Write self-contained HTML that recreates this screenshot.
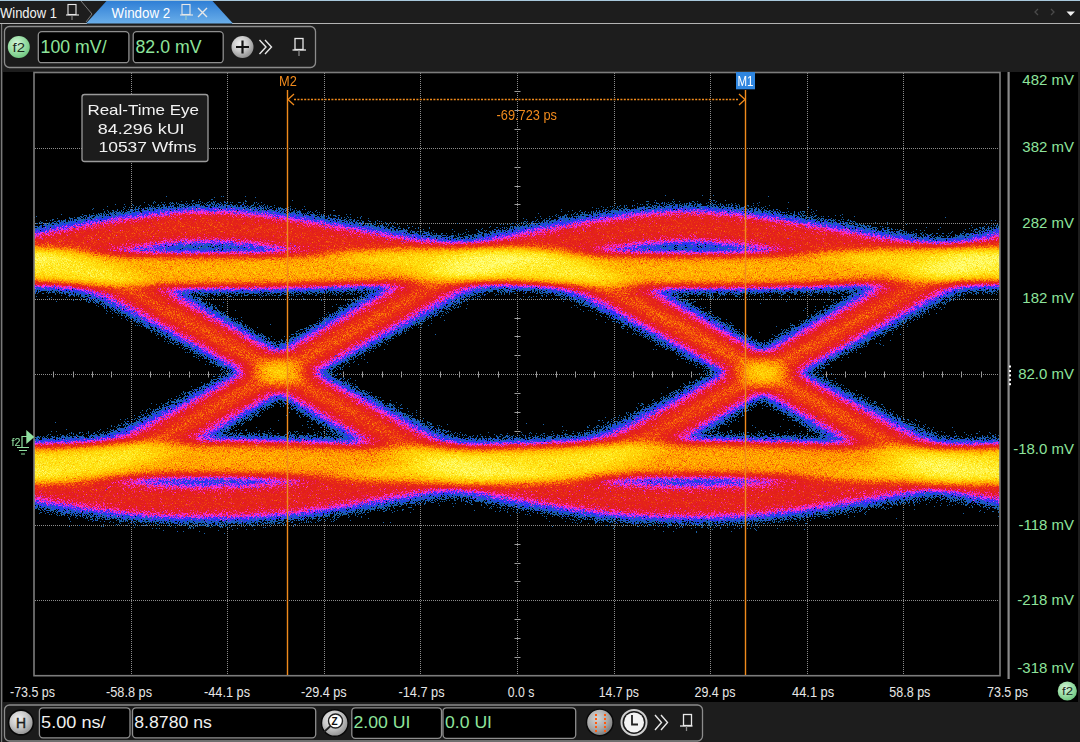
<!DOCTYPE html>
<html><head><meta charset="utf-8">
<style>
html,body{margin:0;padding:0;width:1080px;height:742px;overflow:hidden;background:#1d1d1d;}
svg,canvas{position:absolute;left:0;top:0;}
text{font-family:"Liberation Sans",sans-serif;}
</style></head><body>
<svg id="base" width="1080" height="742" viewBox="0 0 1080 742">
<defs>
<linearGradient id="tabg" x1="0" y1="0" x2="0" y2="1"><stop offset="0" stop-color="#2f7fd6"/><stop offset="1" stop-color="#6aaee9"/></linearGradient>
<radialGradient id="grn" cx="0.4" cy="0.35" r="0.7"><stop offset="0" stop-color="#d8f5dc"/><stop offset="0.45" stop-color="#a4e3ae"/><stop offset="1" stop-color="#6cc47c"/></radialGradient>
<radialGradient id="gry" cx="0.4" cy="0.35" r="0.7"><stop offset="0" stop-color="#f0f0f0"/><stop offset="0.5" stop-color="#c8c8c8"/><stop offset="1" stop-color="#8a8a8a"/></radialGradient>
<radialGradient id="gry2" cx="0.4" cy="0.35" r="0.75"><stop offset="0" stop-color="#d4d4d4"/><stop offset="0.55" stop-color="#a8a8a8"/><stop offset="1" stop-color="#6a6a6a"/></radialGradient>
</defs>
<!-- top line -->
<rect x="0" y="0" width="1080" height="1" fill="#a8c8dc"/>
<!-- tab bar lines -->
<rect x="0" y="23" width="87" height="1" fill="#b4b4b4"/>
<rect x="232" y="23" width="848" height="1" fill="#b4b4b4"/>
<!-- tab1 edge -->
<polyline points="81,1 92,14 86,22" fill="none" stroke="#7a7a7a" stroke-width="1"/>
<!-- active tab -->
<polygon points="86,23.5 106.5,1 212.5,1 233,23.5" fill="url(#tabg)"/>
<text x="0" y="18.4" fill="#f2f2f2" font-size="14.5" textLength="57" lengthAdjust="spacingAndGlyphs">Window 1</text>
<text x="111.6" y="18.4" fill="#ffffff" font-size="14.5" textLength="58.7" lengthAdjust="spacingAndGlyphs">Window 2</text>
<!-- pins in tabs -->
<g fill="none" stroke="#e8e8e8" stroke-width="1.1">
<rect x="68" y="4.5" width="8" height="10"/><line x1="66" y1="15" x2="79" y2="15"/><line x1="72" y1="15" x2="72" y2="20" stroke="#888"/>
<rect x="182" y="4.5" width="8" height="10"/><line x1="180" y1="15" x2="193" y2="15"/><line x1="186" y1="15" x2="186" y2="20" stroke="#9cc"/>
<path d="M198,8 L207,17 M207,8 L198,17" stroke-width="1.4"/>
</g>
<!-- right arrows -->
<path d="M1038,9 L1035,12 L1038,15" fill="none" stroke="#4a4a4a" stroke-width="1.3"/>
<path d="M1051,9 L1054,12 L1051,15" fill="none" stroke="#4a4a4a" stroke-width="1.3"/>
<polygon points="1066.5,11.5 1075,11.5 1070.7,16" fill="#f0f0f0"/>

<!-- toolbar -->
<rect x="4.5" y="26.5" width="311" height="41" rx="5" fill="#1b1b1b" stroke="#8c8c8c" stroke-width="1.3"/>
<circle cx="18.8" cy="47" r="11" fill="url(#grn)"/>
<text x="12.5" y="51.5" fill="#1a2a1c" font-size="12" textLength="12.5" lengthAdjust="spacingAndGlyphs">f2</text>
<rect x="38.3" y="31.6" width="90.6" height="31.1" rx="3.5" fill="#000" stroke="#8e8e8e" stroke-width="1.3"/>
<rect x="133.2" y="31.6" width="90" height="31.1" rx="3.5" fill="#000" stroke="#8e8e8e" stroke-width="1.3"/>
<text x="40.6" y="52.7" fill="#8ee49c" font-size="17.8" textLength="66" lengthAdjust="spacingAndGlyphs">100 mV/</text>
<text x="135.5" y="52.7" fill="#8ee49c" font-size="17.8" textLength="66" lengthAdjust="spacingAndGlyphs">82.0 mV</text>
<circle cx="242.5" cy="47" r="11" fill="url(#gry)"/>
<path d="M236,47 H249 M242.5,40.5 V53.5" stroke="#111" stroke-width="2.2"/>
<path d="M259.5,40 L266,47 L259.5,54 M265,40 L271.5,47 L265,54" fill="none" stroke="#e8e8e8" stroke-width="1.4"/>
<g fill="none" stroke="#e8e8e8" stroke-width="1.3">
<rect x="295" y="38.5" width="8" height="11"/><line x1="292.5" y1="50" x2="306" y2="50"/><line x1="299" y1="50" x2="299" y2="56" stroke="#888"/>
</g>

<!-- plot black region -->
<rect x="3" y="72" width="1075" height="630" fill="#000"/>
<rect x="1" y="24" width="1.2" height="718" fill="#7a7a7a"/>
<!-- grid -->
<g id="grid" stroke="#8c8c8c" stroke-width="1" stroke-dasharray="1,1" fill="none">
<line x1="131.5" y1="73" x2="131.5" y2="675"/>
<line x1="227.5" y1="73" x2="227.5" y2="675"/>
<line x1="324.5" y1="73" x2="324.5" y2="675"/>
<line x1="420.5" y1="73" x2="420.5" y2="675"/>
<line x1="517.5" y1="73" x2="517.5" y2="675"/>
<line x1="614.5" y1="73" x2="614.5" y2="675"/>
<line x1="710.5" y1="73" x2="710.5" y2="675"/>
<line x1="807.5" y1="73" x2="807.5" y2="675"/>
<line x1="903.5" y1="73" x2="903.5" y2="675"/>
<line x1="35" y1="148.5" x2="999" y2="148.5"/>
<line x1="35" y1="223.5" x2="999" y2="223.5"/>
<line x1="35" y1="299.5" x2="999" y2="299.5"/>
<line x1="35" y1="374.5" x2="999" y2="374.5"/>
<line x1="35" y1="450.5" x2="999" y2="450.5"/>
<line x1="35" y1="525.5" x2="999" y2="525.5"/>
<line x1="35" y1="600.5" x2="999" y2="600.5"/>
<path d="M53.5,371.5V377.5M73.5,371.5V377.5M92.5,371.5V377.5M111.5,371.5V377.5M150.5,371.5V377.5M169.5,371.5V377.5M189.5,371.5V377.5M208.5,371.5V377.5M247.5,371.5V377.5M266.5,371.5V377.5M285.5,371.5V377.5M304.5,371.5V377.5M343.5,371.5V377.5M362.5,371.5V377.5M382.5,371.5V377.5M401.5,371.5V377.5M440.5,371.5V377.5M459.5,371.5V377.5M478.5,371.5V377.5M498.5,371.5V377.5M536.5,371.5V377.5M556.5,371.5V377.5M575.5,371.5V377.5M594.5,371.5V377.5M633.5,371.5V377.5M652.5,371.5V377.5M672.5,371.5V377.5M691.5,371.5V377.5M730.5,371.5V377.5M749.5,371.5V377.5M768.5,371.5V377.5M787.5,371.5V377.5M826.5,371.5V377.5M845.5,371.5V377.5M865.5,371.5V377.5M884.5,371.5V377.5M923.5,371.5V377.5M942.5,371.5V377.5M961.5,371.5V377.5M981.5,371.5V377.5M514.5,91.5H520.5M514.5,110.5H520.5M514.5,129.5H520.5M514.5,167.5H520.5M514.5,186.5H520.5M514.5,204.5H520.5M514.5,242.5H520.5M514.5,261.5H520.5M514.5,280.5H520.5M514.5,318.5H520.5M514.5,336.5H520.5M514.5,355.5H520.5M514.5,393.5H520.5M514.5,412.5H520.5M514.5,431.5H520.5M514.5,468.5H520.5M514.5,487.5H520.5M514.5,506.5H520.5M514.5,544.5H520.5M514.5,563.5H520.5M514.5,581.5H520.5M514.5,619.5H520.5M514.5,638.5H520.5M514.5,657.5H520.5" stroke-dasharray="none" stroke="#9a9a9a"/>
</g>
<!-- right axis line -->
<rect x="1007.5" y="72" width="2.2" height="607" fill="#8a8a8a"/>
<g fill="#fff"><rect x="1009" y="365.5" width="2" height="2"/><rect x="1009" y="370" width="2" height="2"/><rect x="1009" y="374.4" width="2" height="2"/><rect x="1009" y="378.8" width="2" height="2"/><rect x="1009" y="383.2" width="2" height="2"/></g>
<!-- y labels -->
<g fill="#8ee49c" font-size="15" text-anchor="end">
<text x="1074" y="85">482 mV</text>
<text x="1074" y="152">382 mV</text>
<text x="1074" y="227.5">282 mV</text>
<text x="1074" y="302.5">182 mV</text>
<text x="1074" y="378.5">82.0 mV</text>
<text x="1074" y="454">-18.0 mV</text>
<text x="1074" y="529.5">-118 mV</text>
<text x="1074" y="605">-218 mV</text>
<text x="1074" y="673">-318 mV</text>
</g>
<!-- x labels -->
<g fill="#e6e6e6" font-size="14">
<text x="10" y="696.5" textLength="45" lengthAdjust="spacingAndGlyphs">-73.5 ps</text>
<text x="106" y="696.5" textLength="46" lengthAdjust="spacingAndGlyphs">-58.8 ps</text>
<text x="204" y="696.5" textLength="46" lengthAdjust="spacingAndGlyphs">-44.1 ps</text>
<text x="301" y="696.5" textLength="45.7" lengthAdjust="spacingAndGlyphs">-29.4 ps</text>
<text x="398.5" y="696.5" textLength="46" lengthAdjust="spacingAndGlyphs">-14.7 ps</text>
<text x="507.8" y="696.5" textLength="26.6" lengthAdjust="spacingAndGlyphs">0.0 s</text>
<text x="598.8" y="696.5" textLength="40.2" lengthAdjust="spacingAndGlyphs">14.7 ps</text>
<text x="694.5" y="696.5" textLength="40.9" lengthAdjust="spacingAndGlyphs">29.4 ps</text>
<text x="792" y="696.5" textLength="42.2" lengthAdjust="spacingAndGlyphs">44.1 ps</text>
<text x="889.3" y="696.5" textLength="41.1" lengthAdjust="spacingAndGlyphs">58.8 ps</text>
<text x="987" y="696.5" textLength="41" lengthAdjust="spacingAndGlyphs">73.5 ps</text>
</g>
<circle cx="1067.3" cy="691" r="9.6" fill="url(#grn)"/>
<text x="1062" y="695" fill="#1a2a1c" font-size="10.5" textLength="11" lengthAdjust="spacingAndGlyphs">f2</text>

<!-- bottom toolbar -->
<rect x="4.5" y="705" width="698" height="36" rx="5" fill="#1b1b1b" stroke="#8c8c8c" stroke-width="1.3"/>
<circle cx="21" cy="722.5" r="12.4" fill="url(#gry)" stroke="#080808" stroke-width="1.6"/>
<text x="16" y="728" fill="#1a1a1a" font-size="14.5" textLength="10" lengthAdjust="spacingAndGlyphs" stroke="#1a1a1a" stroke-width="0.4">H</text>
<rect x="39.4" y="707.8" width="90.6" height="30" rx="3.5" fill="#000" stroke="#8e8e8e" stroke-width="1.3"/>
<rect x="132.5" y="707.8" width="183.2" height="30" rx="3.5" fill="#000" stroke="#8e8e8e" stroke-width="1.3"/>
<text x="41.1" y="728.3" fill="#f0f0f0" font-size="16.8" textLength="64.5" lengthAdjust="spacingAndGlyphs">5.00 ns/</text>
<text x="134.3" y="728.3" fill="#f0f0f0" font-size="16.8" textLength="77.5" lengthAdjust="spacingAndGlyphs">8.8780 ns</text>
<circle cx="334.8" cy="723" r="13.3" fill="url(#gry)" stroke="#080808" stroke-width="1.4"/>
<circle cx="335.5" cy="721" r="7" fill="#fff" stroke="#222" stroke-width="1.4"/>
<line x1="330.5" y1="726" x2="324" y2="732" stroke="#222" stroke-width="1.8"/>
<text x="331.5" y="725" fill="#111" font-size="10" font-weight="bold">Z</text>
<rect x="351.8" y="707.8" width="89.7" height="30.5" rx="3.5" fill="#000" stroke="#8e8e8e" stroke-width="1.3"/>
<rect x="443" y="707.8" width="132.7" height="30.5" rx="3.5" fill="#000" stroke="#8e8e8e" stroke-width="1.3"/>
<text x="353.5" y="728.3" fill="#8ee49c" font-size="16.8" textLength="57" lengthAdjust="spacingAndGlyphs">2.00 UI</text>
<text x="445" y="728.3" fill="#8ee49c" font-size="16.8" textLength="47" lengthAdjust="spacingAndGlyphs">0.0 UI</text>
<circle cx="599.8" cy="722.4" r="13.3" fill="url(#gry2)" stroke="#080808" stroke-width="1.4"/>
<g fill="#ff5a10"><rect x="595" y="714" width="2" height="2"/><rect x="595" y="718" width="2" height="2"/><rect x="595" y="722" width="2" height="2"/><rect x="595" y="726" width="2" height="2"/><rect x="595" y="730" width="2" height="2"/>
<rect x="604" y="714" width="2" height="2"/><rect x="604" y="718" width="2" height="2"/><rect x="604" y="722" width="2" height="2"/><rect x="604" y="726" width="2" height="2"/><rect x="604" y="730" width="2" height="2"/></g>
<circle cx="634" cy="722.4" r="12.5" fill="none" stroke="#cfcfcf" stroke-width="2"/>
<circle cx="634" cy="722.4" r="10" fill="#f4f4f4"/>
<path d="M632,715 V724.5 H638" fill="none" stroke="#222" stroke-width="1.8"/>
<path d="M655,715 L661.5,722.5 L655,730 M661,715 L667.5,722.5 L661,730" fill="none" stroke="#e8e8e8" stroke-width="1.4"/>
<g fill="none" stroke="#e8e8e8" stroke-width="1.3">
<rect x="683.5" y="714.5" width="8" height="11"/><line x1="680" y1="726" x2="692.5" y2="726"/><line x1="686.5" y1="726" x2="686.5" y2="731" stroke="#888"/>
</g>
</svg>
<!--FB--><svg id="eyefb" width="1080" height="742" viewBox="0 0 1080 742"><g transform="translate(0.5,0.5)">
<path fill="#1e50aa" fill-rule="evenodd" d="M33,229 31,266 32,284 36,290 56,290 61,292 78,293 95,300 100,300 106,305 117,309 138,321 141,321 146,326 155,328 172,339 188,346 230,370 226,376 194,391 185,398 152,413 150,416 144,417 133,424 127,425 124,428 107,434 89,437 81,436 35,439 32,444 31,466 32,495 35,506 56,509 63,512 83,514 90,513 97,516 102,515 122,519 128,518 181,523 189,521 217,523 221,521 250,522 285,518 304,518 308,516 313,517 316,515 321,516 333,512 347,512 357,509 367,509 407,501 412,502 421,499 430,499 433,497 465,496 477,500 483,499 501,504 546,510 561,514 574,514 584,517 593,516 597,519 617,518 632,522 659,521 680,523 683,521 700,523 703,521 724,522 771,519 795,515 803,516 807,514 812,515 816,512 827,513 838,509 843,510 856,506 865,507 886,501 933,495 963,498 968,502 981,502 995,506 998,505 1000,501 1002,464 1001,444 998,439 938,438 923,431 916,430 912,426 909,426 899,419 888,415 862,400 854,398 851,394 830,385 811,373 814,368 834,358 845,350 853,348 945,297 967,290 998,289 1001,284 1002,268 1001,234 999,228 982,231 980,233 972,233 966,236 931,238 929,236 918,237 910,234 878,231 865,227 829,222 825,220 817,221 810,218 804,219 797,216 787,216 776,212 753,211 731,207 676,205 618,210 569,219 559,218 554,221 516,227 505,231 496,231 475,237 453,238 432,236 428,234 408,233 403,230 392,230 384,227 375,227 334,219 325,219 322,217 294,212 290,213 278,210 240,206 193,205 143,209 141,211 137,210 96,216 93,218 88,217 85,219 44,225ZM704,432 738,411 744,409 748,405 759,400 766,400 782,411 787,412 790,415 794,415 803,423 819,431 821,436 818,438 790,436 707,435ZM222,432 259,408 281,399 293,405 305,414 308,414 312,418 334,429 340,436 336,438 308,436 225,435ZM854,292 849,297 826,310 822,314 811,318 787,333 781,335 777,339 764,345 757,344 736,333 724,324 701,312 697,308 679,300 676,295 683,292 741,293 848,290ZM327,371 351,356 365,350 384,338 399,332 415,322 422,320 426,316 435,313 464,296 491,289 516,289 553,292 581,300 592,307 596,307 598,310 621,320 625,324 629,324 641,332 652,336 656,340 661,341 665,345 675,349 686,357 705,365 712,371 712,374 673,396 640,411 631,418 625,419 608,428 594,433 580,436 554,438 462,439 435,432 419,422 404,416 400,412 385,406 372,397 365,395 351,388 349,385 335,379ZM369,291 365,297 292,338 288,342 275,345 256,335 240,324 230,320 191,296 193,292 259,293 327,290 345,291 364,289Z"/>
<path fill="#282df0" fill-rule="evenodd" d="M34,233 33,282 35,286 75,289 100,296 114,302 117,305 120,305 147,321 156,324 164,330 171,332 180,339 198,347 204,352 231,366 235,371 235,373 228,379 207,389 187,402 164,412 125,433 88,440 35,442 33,445 33,490 35,500 40,503 54,504 83,510 128,514 131,516 139,515 171,518 189,517 229,519 311,513 315,511 412,497 427,493 462,492 485,495 509,501 551,506 571,511 592,512 596,514 657,518 732,518 757,515 763,516 778,513 783,514 814,508 825,509 835,505 846,505 924,491 954,493 973,498 978,497 997,501 999,497 1000,446 998,442 944,442 919,436 820,384 805,374 805,371 811,365 946,292 963,287 997,286 1000,282 1000,239 998,232 967,240 912,240 902,237 852,231 845,228 831,227 810,222 805,223 775,216 706,209 678,209 627,213 573,221 477,240 443,241 429,238 409,237 400,234 392,234 265,212 258,213 241,210 237,211 234,209 184,209 176,211 151,212 138,214 135,216 118,216 103,220 55,227 48,230 36,231ZM229,481 233,481ZM209,481 217,480 218,482 214,483ZM197,481 201,480 203,482 198,483ZM693,481 695,479 700,481 697,483ZM693,434 721,416 742,406 753,398 765,396 830,432 836,437 836,439 830,441 783,439 756,440 734,438 710,439 697,437ZM210,434 244,412 254,408 271,397 280,395 296,402 300,406 339,427 351,435 352,438 348,441 257,438 235,439 215,438ZM867,288 859,297 812,322 782,341 764,349 756,348 746,341 718,327 702,316 669,299 663,293 665,290 677,289 741,290 852,286ZM321,370 360,347 367,345 369,342 390,332 398,326 407,323 411,319 435,306 438,306 449,298 474,288 507,286 549,288 582,296 623,316 627,320 656,334 708,364 713,365 719,370 719,373 714,378 675,400 645,414 635,421 598,436 569,440 530,442 458,442 442,439 414,426 374,403 328,380 321,374ZM382,289 382,291 374,297 361,303 357,307 348,310 334,320 280,349 266,345 233,325 209,313 179,294 183,290 198,289 271,290 359,286 380,287ZM640,247 642,245 656,245 662,243 699,242 735,246 736,248 714,251 668,251 649,249 644,250ZM163,247 165,245 178,243 185,244 211,242 232,243 236,245 245,245 248,247 251,245 254,248 248,250 239,249 224,251 166,250Z"/>
<path fill="#f032e1" fill-rule="evenodd" d="M34,239 33,278 36,285 68,286 92,290 107,295 233,363 240,370 240,373 234,379 216,390 128,435 112,439 87,442 35,444 33,451 33,481 35,496 39,499 132,513 141,512 159,515 177,514 229,516 291,512 351,504 369,499 404,495 413,492 459,489 467,491 482,491 512,498 521,498 541,503 551,503 597,511 649,515 709,516 757,512 764,513 768,511 799,509 808,506 830,504 872,496 875,497 908,490 914,491 922,489 937,489 948,491 954,490 990,497 997,497 1000,481 1000,451 998,444 943,444 918,439 892,427 885,421 865,412 854,404 843,400 811,382 800,372 807,364 944,289 962,285 997,284 1000,277 1000,248 997,236 968,242 921,243 870,237 856,233 818,228 781,220 778,221 764,218 746,217 736,214 728,215 695,212 667,212 663,214 653,213 648,215 634,215 625,218 591,221 489,241 442,243 409,240 401,237 384,236 376,233 368,233 354,229 346,229 342,227 334,227 285,218 235,214 230,212 171,213 168,215 151,215 147,217 119,219 115,221 72,227 65,230 41,233 36,235ZM274,481 278,481ZM621,482 628,478 635,479 646,477 732,477 757,481 756,483 752,482 741,486 662,487 659,485 651,486 635,485 631,483 623,484ZM140,482 141,480 149,478 250,477 271,479 274,481 271,484 259,484 255,486 220,486 202,488 163,485 155,486ZM687,437 689,433 700,424 705,423 715,416 723,413 730,407 740,403 752,395 763,393 769,394 787,403 824,426 836,431 844,439 838,443 823,444 779,441 691,440ZM201,435 207,429 212,428 221,421 228,419 245,407 253,405 271,394 283,393 290,395 330,419 342,424 355,432 361,440 357,443 350,444 294,441 219,441 207,440ZM875,288 872,293 860,301 839,311 813,327 806,329 802,333 779,346 767,351 754,350 698,319 694,315 671,304 656,293 659,289 669,287 735,288 869,284ZM316,373 320,366 415,314 419,310 426,308 438,300 441,300 454,291 471,286 493,284 549,286 583,293 606,303 638,322 661,333 667,338 684,346 712,363 717,364 724,371 719,379 681,399 675,404 660,410 647,419 613,435 573,442 548,442 533,444 458,444 440,441 418,432 405,424 402,424 370,405 362,402 358,398 336,386 327,383ZM391,290 346,317 297,343 293,347 282,351 269,350 266,347 259,345 239,332 230,329 219,321 191,307 182,300 179,300 172,293 174,289 201,287 271,288 360,284 386,285ZM616,249 618,246 622,247 625,244 638,242 684,239 736,242 766,248 764,250 753,252 745,251 730,253 632,252 628,250 624,252ZM279,248 274,251 245,253 171,253 150,251 144,252 133,249 136,246 151,245 166,241 172,242 179,240 211,239 232,240 236,242 247,241 273,247 277,246Z"/>
<path fill="#dc1c28" fill-rule="evenodd" d="M35,240 34,279 36,283 87,287 109,292 119,298 123,298 127,302 130,302 150,314 159,317 162,321 172,325 178,330 191,335 195,339 202,341 218,352 232,358 243,366 245,373 235,383 230,384 224,389 194,406 189,407 185,411 180,412 161,424 158,424 135,436 95,443 36,445 34,448 34,483 37,494 52,496 60,499 117,506 120,508 135,508 138,510 153,509 158,511 231,512 254,511 262,509 276,510 287,507 295,508 303,505 309,506 319,503 325,504 348,498 361,498 363,496 378,495 384,492 389,493 392,491 404,491 410,489 460,487 493,490 498,492 517,492 537,498 548,498 552,501 583,504 586,506 600,506 605,508 619,508 623,510 635,509 638,511 656,510 663,512 709,512 720,510 739,511 765,509 768,507 782,505 787,506 790,504 798,505 848,495 861,495 864,492 871,493 876,490 884,491 899,488 955,488 981,492 986,491 991,493 996,493 998,489 998,446 944,446 916,442 852,409 826,393 822,393 817,388 800,379 796,372 797,368 809,358 813,358 830,347 841,343 849,336 854,335 862,329 880,321 885,316 903,308 914,300 935,289 957,284 998,282 999,246 997,240 950,245 904,244 897,242 872,241 859,237 842,236 824,231 788,225 784,226 781,224 755,221 751,219 745,220 728,217 717,218 711,216 686,215 679,217 673,215 668,217 661,216 642,219 637,218 625,221 613,221 607,224 592,224 588,227 564,229 551,234 546,233 544,236 536,235 533,237 480,244 425,244 402,242 399,240 386,240 369,235 351,234 343,231 335,231 321,227 306,226 284,221 229,215 182,215 158,219 152,218 148,220 128,221 114,225 110,224 74,230 51,236 43,236ZM601,482 607,479 637,475 734,475 776,478 779,481 779,484 764,488 747,488 741,490 720,489 710,491 692,490 690,492 683,490 661,491 642,490 636,488 615,488 604,485ZM120,482 123,479 160,475 254,475 297,478 300,480 300,483 297,486 242,491 146,490 140,487 130,489 123,486ZM676,435 685,428 694,425 698,421 720,410 725,405 728,405 743,395 747,395 755,391 768,391 778,394 834,427 841,429 845,433 852,436 854,440 851,444 844,445 762,444 737,442 718,443 681,441ZM193,434 208,423 215,421 231,410 235,410 248,403 259,395 262,395 268,391 284,390 292,392 340,419 346,424 352,425 362,433 368,435 371,438 371,441 368,444 358,446 297,443 201,442 196,440 193,437ZM312,367 341,349 364,338 400,317 403,317 414,308 432,300 439,294 456,287 479,283 517,283 563,286 587,291 601,297 660,330 667,332 671,336 676,337 699,352 705,353 714,360 718,361 727,368 727,376 723,381 710,389 706,389 692,399 665,412 654,420 647,422 645,425 613,438 565,444 466,446 438,443 415,436 408,430 397,426 386,418 382,418 377,413 360,404 357,404 353,400 322,384 312,375ZM886,288 885,290 879,292 876,297 870,298 862,304 841,314 835,319 785,345 773,353 751,352 741,347 739,344 731,342 727,338 692,320 686,315 683,315 667,305 664,305 647,294 647,291 651,288 661,286 758,286 873,282 880,283ZM402,287 391,296 376,303 370,308 367,308 349,320 333,327 319,337 299,346 293,351 285,353 268,353 257,348 219,325 210,322 199,314 179,305 161,292 168,287 177,286 272,286 387,282 392,284 394,283ZM112,248 114,246 135,242 197,236 266,240 280,244 295,244 299,247 296,251 284,253 242,255 140,254 122,251 119,252 117,250 114,251ZM594,248 597,245 600,246 612,242 660,237 676,237 680,235 685,237 701,236 740,239 747,241 753,240 771,245 778,245 780,247 779,250 768,253 730,255 622,254 604,252Z"/>
<path fill="#ec3c12" fill-rule="evenodd" d="M34,462 35,482 38,486 73,485 76,483 84,484 95,480 128,474 176,471 274,472 314,476 317,475 338,480 350,480 357,482 364,481 367,483 405,482 417,484 499,485 505,487 521,485 535,486 541,484 550,485 560,483 568,484 571,482 604,475 661,471 781,473 799,475 808,478 818,478 822,480 847,481 851,483 888,482 894,484 918,483 962,486 996,486 999,475 997,448 930,448 898,441 890,441 878,433 876,434 875,442 873,444 854,449 678,445 674,443 667,443 659,439 658,440 656,438 657,433 655,435 645,434 641,437 612,442 560,447 468,449 397,441 378,448 342,449 245,445 195,445 190,443 182,443 178,440 171,439 169,437 170,434 181,428 177,427 155,437 127,442 76,447 36,448ZM189,420 187,420 183,426 185,426ZM680,418 675,418 671,423 667,424 670,425ZM202,413 199,412 195,417 200,417ZM322,396 322,399 337,405 340,409 344,408 353,414 355,413 354,410 341,406 339,402 326,399 324,395ZM200,328 202,332 206,332 214,341 220,340 225,344 223,338 213,335 206,328ZM184,319 186,323 193,324ZM387,313 375,313 374,317 368,318 363,322 362,326 352,326 349,331 342,333 340,337 335,337 328,340 325,343 318,345 317,348 310,349 307,353 299,357 260,357 246,351 243,348 228,344 231,350 235,349 239,354 242,355 245,351 246,352 244,357 248,358 253,365 252,379 249,384 242,389 237,389 227,398 221,399 213,405 213,407 215,408 219,405 222,406 225,402 229,403 235,395 239,396 245,394 255,387 257,388 269,385 276,387 291,385 306,387 317,397 319,393 318,391 306,383 303,374 303,366 316,353 320,353 326,347 330,347 332,343 337,344 347,337 350,337 353,333 372,325 373,319 378,319 385,316ZM165,312 171,316 175,315 181,317 179,313 175,314 169,309ZM873,308 873,311 877,312 877,310ZM399,304 394,304 392,309 397,308ZM885,305 890,304 887,302ZM149,301 153,304 155,303 153,301ZM406,299 406,302 408,302 409,299ZM631,299 631,304 644,308 648,315 652,315 654,319 658,317 665,324 676,326 680,331 683,331 695,341 698,341 709,348 713,347 715,352 722,354 734,362 737,381 725,389 721,394 713,396 710,402 706,400 700,407 693,407 685,412 685,414 689,415 691,409 696,407 701,409 705,405 709,406 722,395 723,396 728,392 732,393 745,387 780,387 786,391 791,390 801,399 805,398 813,405 818,405 822,410 836,415 839,420 846,420 850,425 859,428 868,435 873,436 873,431 867,429 865,425 860,425 844,412 830,407 820,398 811,395 805,390 799,389 791,381 788,375 788,364 796,358 801,351 806,351 817,347 829,336 833,337 844,328 851,327 858,321 867,318 869,316 867,312 860,314 853,320 844,323 842,329 834,328 817,341 803,345 798,350 794,350 792,353 783,357 750,358 736,354 731,349 718,344 714,340 711,340 700,333 696,333 688,325 686,326 682,322 654,310 637,298 634,301ZM415,295 412,296 412,299ZM140,293 139,296 142,296 143,294ZM34,253 35,279 37,281 66,282 111,287 128,291 130,293 140,291 141,289 151,285 162,283 273,283 361,279 375,280 394,278 412,281 429,289 448,284 472,281 507,280 549,282 594,288 607,293 613,292 615,295 622,295 623,298 626,298 624,295 628,289 640,284 648,283 759,283 875,278 892,280 917,288 932,284 956,281 995,281 998,278 999,254 997,245 932,248 837,248 826,250 820,249 816,252 809,251 786,256 780,255 748,258 613,257 586,254 580,251 573,251 556,246 528,244 476,247 352,247 343,250 328,250 321,253 304,256 257,258 127,257 94,252 78,246 72,247 68,245 59,246 51,244 36,245Z"/>
<path fill="#fa7805" fill-rule="evenodd" d="M35,452 35,479 37,483 43,484 73,482 107,475 162,469 225,468 239,470 289,470 294,472 308,471 359,479 398,481 409,480 468,484 511,484 524,482 539,483 576,479 595,474 667,468 711,468 721,470 749,469 766,471 791,470 793,472 812,474 816,476 829,476 832,478 892,481 905,480 957,484 996,484 998,480 998,452 996,449 938,450 897,444 888,444 878,448 853,452 847,451 843,453 829,451 796,451 752,448 682,448 641,440 605,445 600,444 586,447 487,451 455,450 402,445 379,451 371,451 368,453 365,451 312,451 299,449 250,449 224,447 193,448 154,440 93,447 37,449ZM741,360 741,381 743,383 754,383 760,385 783,383 782,379 784,375 784,368 781,362 768,360 744,362ZM257,364 257,376 264,382 289,383 300,380 297,362 290,360 273,360ZM35,250 35,276 39,280 80,282 106,286 111,285 115,287 138,286 158,281 275,281 323,278 368,278 384,276 400,276 430,283 484,279 539,280 602,287 606,289 651,280 748,281 884,276 907,280 913,283 926,283 961,279 997,279 998,277 998,250 997,247 992,246 946,249 864,249 834,252 829,251 826,253 821,252 818,254 810,254 792,258 741,260 608,259 574,254 558,249 511,246 459,249 379,249 346,251 318,257 263,260 127,259 96,255 69,248 36,247Z"/>
<path fill="#ffb400" fill-rule="evenodd" d="M666,461 666,463 670,463 669,460ZM171,462 178,464 180,463 177,460 173,460ZM312,457 308,459 311,459ZM267,459 273,462 271,457ZM238,457 231,456 224,462 228,464 233,458ZM204,455 205,458 208,458 208,456ZM837,473 846,473 865,477 883,476 891,478 910,478 935,481 941,480 951,482 995,482 998,476 997,453 991,451 982,453 942,452 892,448 872,453 868,458 870,461 864,465 860,463 856,463 852,467 850,466 851,464 843,465ZM667,452 658,447 631,444 621,446 614,445 607,447 593,447 586,449 581,448 533,452 524,451 489,453 460,451 447,452 440,450 411,448 408,450 402,449 399,451 394,451 390,455 383,456 384,460 381,463 379,462 373,464 371,467 367,464 363,468 353,466 352,470 356,473 370,476 468,482 547,480 583,475 593,472 623,469 627,467 638,467 654,461 659,455ZM385,459 387,457 389,458 388,460ZM184,450 170,448 162,444 135,444 93,449 39,451 36,453 35,476 37,481 65,480 125,471 129,469 138,469 142,466 152,467 161,465 163,462 167,462 174,456 182,456ZM747,369 749,377 757,380 773,379 776,374 775,367 765,364 755,364ZM264,369 266,376 269,376 271,379 282,379 288,376 293,376 290,367 282,364 270,365ZM781,272 782,274 797,273 797,271 792,270 790,266 788,266 785,271ZM35,253 35,272 38,278 56,278 92,281 98,283 123,284 141,282 153,279 156,275 160,275 162,272 164,275 167,274 169,277 173,274 181,276 180,274 182,272 193,277 200,277 202,274 213,276 218,272 222,277 231,276 236,272 240,276 247,276 248,272 251,272 254,275 260,272 265,275 266,273 270,274 270,272 266,272 267,268 273,268 275,270 273,274 277,276 282,276 290,271 301,276 304,274 309,275 310,273 318,275 319,272 314,270 315,267 322,269 324,272 322,274 329,272 329,270 324,268 325,261 320,261 317,267 313,266 316,263 309,264 308,270 306,265 299,268 291,265 285,266 281,263 279,268 273,264 270,265 267,263 245,264 242,262 236,264 234,267 230,267 228,265 216,265 213,269 210,268 209,264 201,264 194,268 192,265 185,264 184,269 182,266 174,266 172,270 168,270 164,264 157,263 154,266 157,269 154,270 147,268 148,266 152,265 151,263 142,263 143,266 140,268 138,265 139,264 134,261 129,263 126,261 116,261 113,259 107,260 104,258 93,257 71,251 37,249ZM298,272 299,270 303,271 301,273ZM239,266 241,264 244,267 241,268ZM998,253 994,248 946,251 882,251 857,254 848,253 836,256 829,255 816,259 811,264 791,263 803,272 811,271 813,273 817,273 816,270 818,268 814,262 821,261 825,272 828,271 828,267 838,272 846,267 849,267 852,271 887,271 892,275 924,280 973,277 995,278 997,277ZM327,262 329,265 333,266 335,270 340,271 343,267 347,272 356,273 348,267 355,265 362,270 365,268 367,271 371,269 384,272 390,271 392,273 405,273 417,277 438,280 511,277 550,279 599,285 609,285 629,281 635,278 648,276 650,273 659,276 665,274 667,278 670,278 672,274 680,277 687,275 695,275 698,277 703,274 707,276 712,274 718,276 719,273 722,275 727,274 729,276 734,276 737,274 741,275 744,271 746,273 753,272 754,276 756,276 765,269 766,271 764,273 767,275 772,269 777,271 787,264 783,263 780,265 778,263 772,263 767,266 759,264 754,265 751,263 737,266 734,264 716,264 713,266 708,264 705,267 702,265 696,267 683,264 682,266 685,266 687,268 686,270 678,268 675,269 674,267 678,265 669,263 667,267 663,265 652,267 650,264 637,264 635,266 628,267 622,263 581,258 557,252 507,248 458,251 443,250 428,252 408,251 396,253 353,254 350,256 346,255 338,258 334,262 331,260 333,257 331,257 331,259ZM637,271 640,270 645,275 644,276ZM702,271 706,269 709,271 709,274 707,275ZM675,269 671,275 666,275 664,273 670,267ZM722,268 729,266 731,269 729,271ZM756,265 760,267 757,273 754,272 754,267ZM345,264 346,263 348,266 347,267Z"/>
<path fill="#ffde0f" fill-rule="evenodd" d="M887,468 911,475 923,475 925,477 990,479 996,478 997,476 996,457 991,455 965,456 953,454 904,453 897,455 892,466ZM633,451 628,448 621,450 609,449 594,452 590,451 586,453 533,456 471,456 460,454 453,455 427,453 414,456 412,461 409,463 409,466 407,468 403,468 404,470 409,469 431,476 452,478 498,479 508,477 537,477 574,472 581,469 587,470 603,467 609,463 626,459 628,455 633,454ZM148,450 144,451 139,448 130,448 120,451 112,450 81,454 74,453 70,455 61,454 57,456 38,455 36,461 36,476 38,478 57,477 67,474 79,474 84,471 94,472 106,468 115,468 129,464 133,460 146,459 149,456ZM878,257 872,259 875,260ZM36,253 36,272 39,275 44,274 110,280 122,280 126,277 126,275 114,270 112,266 106,266 87,259 82,259 79,257 76,258 60,253ZM997,271 997,253 995,251 950,252 945,254 927,256 920,255 909,258 905,257 903,259 897,257 894,261 886,258 883,261 888,264 897,264 913,274 931,277 996,274ZM394,260 394,263 401,261 406,265 411,264 430,274 448,277 507,274 598,280 607,277 612,278 613,276 612,274 606,273 601,269 597,269 580,261 571,260 556,255 548,255 545,253 522,251 477,251 435,256 421,255 414,256 410,260 404,257 397,257Z"/>
<path fill="#fffa6e" fill-rule="evenodd" d="M503,468 504,471 509,471 508,469ZM916,465 923,469 927,466 934,472 940,473 953,472 955,474 965,474 967,472 978,473 988,471 986,468 982,468 980,466 975,468 970,466 968,468 966,465 945,460 939,460 935,463 931,460 920,461ZM438,463 442,469 452,469 460,473 463,472 465,474 470,473 474,475 476,473 490,474 497,468 492,469 489,466 481,466 480,469 478,464 471,465 470,463 457,463 455,460ZM37,260 41,263 47,260 46,257 38,256ZM996,257 994,255 990,257 987,255 973,255 968,257 959,256 946,262 944,261 933,265 931,270 947,273 951,271 967,271 975,267 989,269 994,265ZM447,268 450,272 454,271 457,273 472,273 476,271 486,272 501,267 507,268 511,266 518,266 532,260 537,262 538,259 531,257 518,257 515,255 488,255 483,257 474,256 464,258 459,261 456,260 453,263 449,262Z"/>
</g></svg><!--/FB-->
<canvas id="eye" width="1080" height="742"></canvas>
<svg id="top" width="1080" height="742" viewBox="0 0 1080 742">
<rect x="34" y="72.5" width="966" height="603.2" fill="none" stroke="#7c7c7c" stroke-width="1.6"/>
<!-- info box -->
<rect x="82" y="94.5" width="126" height="67" rx="2.5" fill="#1c1c1c" stroke="#9a9a9a" stroke-width="1.3"/>
<g fill="#f2f2f2" font-size="15">
<text x="87.4" y="114.9" textLength="111.6" lengthAdjust="spacingAndGlyphs">Real-Time Eye</text>
<text x="97.8" y="133.6" textLength="86.8" lengthAdjust="spacingAndGlyphs">84.296 kUI</text>
<text x="98.5" y="152.4" textLength="97.9" lengthAdjust="spacingAndGlyphs">10537 Wfms</text>
</g>
<!-- markers -->
<g stroke="#f08a1c" fill="none">
<line x1="287.5" y1="90" x2="287.5" y2="675" stroke-width="1.4"/>
<line x1="745.5" y1="90" x2="745.5" y2="675" stroke-width="1.4"/>
<line x1="294" y1="99.5" x2="739" y2="99.5" stroke-width="1.6" stroke-dasharray="2,1.4"/>
<path d="M294,94 L288,99.5 L294,105 M739,94 L745,99.5 L739,105" stroke-width="1.3"/>
</g>
<text x="279" y="86.4" fill="#f08a1c" font-size="14" textLength="17.8" lengthAdjust="spacingAndGlyphs">M2</text>
<rect x="736" y="72" width="19" height="17.3" fill="#2f86e0"/>
<text x="737.5" y="86.4" fill="#fff" font-size="14" textLength="16" lengthAdjust="spacingAndGlyphs">M1</text>
<text x="496.6" y="119.6" fill="#f08a1c" font-size="14.8" textLength="60.4" lengthAdjust="spacingAndGlyphs">-69.723 ps</text>
<!-- f2 ground marker -->
<g fill="none" stroke="#90e0a0" stroke-width="1.2">
<path d="M22,447 V436.5 H27"/><path d="M17,447.5 H29 M19,450.5 H27 M21,454 H25"/>
</g>
<polygon points="26.3,430 34.4,437 26.3,444" fill="#90e0a0"/>
<text x="11.5" y="446" fill="#90e0a0" font-size="10" textLength="9" lengthAdjust="spacingAndGlyphs">f2</text>
</svg>
<!--EYE--><script>
(function(){
var fbe=document.getElementById('eyefb');if(fbe)fbe.style.display='none';
var cv=document.getElementById('eye'),ctx=cv.getContext('2d');
var W=1080,H=742;
var P={X0:34,X1:1000,UI:483.25,ytop:262,ybot:466,m:1.33,ss:0.07,sv:0.05,D:0.18,dn:0.15,Dz:0.95,L:-0.04,dj:0.07,s0:-0.8,sp:-0.15,s1:0.5,sj:0.005,ju:0.05,sn:0.015,su:0.05,kap:0.5,na:0.05,dcd:0.03,pt:0.3,N:6000,k:10,ht:0.004,hs:0.04,xoff:3,st:[[0,20,90,120],[0.06,30,100,190],[0.15,30,40,255],[0.27,255,50,240],[0.38,225,25,35],[0.52,230,40,20],[0.6,245,90,10],[0.68,255,150,0],[0.77,255,195,0],[0.87,255,230,20],[1,255,255,130]]};
var seed=20240611;function rnd(){seed^=seed<<13;seed>>>=0;seed^=seed>>>17;seed^=seed<<5;seed>>>=0;return seed/4294967296;}
function gauss(){var u=rnd()||1e-9,v=rnd();return Math.sqrt(-2*Math.log(u))*Math.cos(6.2831853*v);}
var R=1000,TL=3,LN=2*TL*R+1,SL=new Float32Array(LN),BL=new Float32Array(LN);
(function(){var raw=new Float32Array(LN);for(var i=0;i<LN;i++){var t=-TL+i/R;var r=0.5+P.m*t;raw[i]=r<0?0:(r>1?1:r);}
var ks=Math.max(1,Math.round(P.ss*R*3)),kw=[],sw=0;for(var j=-ks;j<=ks;j++){var w=Math.exp(-0.5*Math.pow(j/(P.ss*R),2));kw.push(w);sw+=w;}
for(var i=0;i<LN;i++){var acc=0;for(var j=-ks;j<=ks;j++){var ii=i+j;ii=ii<0?0:(ii>=LN?LN-1:ii);acc+=raw[ii]*kw[j+ks];}SL[i]=acc/sw;var t=-TL+i/R;var s0=P.s0,sp=P.sp,s1=P.s1;BL[i]=(t>s0&&t<sp)?Math.pow(Math.sin(Math.PI/2*(t-s0)/(sp-s0)),2):((t>=sp&&t<s1)?Math.pow(Math.cos(Math.PI/2*(t-sp)/(s1-sp)),2):0);}})();
var cols=P.X1-P.X0,hist=new Float32Array(W*H);
var NT=131072,GT=new Float32Array(NT);for(var i=0;i<NT;i++)GT[i]=gauss();
var gi=0,KMIN=-4,NB=9,b=new Int8Array(NB),amp=new Float32Array(NB),jk=new Float32Array(NB),gk=new Float32Array(NB),v=new Float32Array(cols),vd=new Float32Array(cols);
var uc=new Float32Array(cols);for(var c=0;c<cols;c++)uc[c]=(c-P.xoff)/P.UI-0.5;
for(var n=0;n<P.N;n++){
  b[0]=rnd()<0.5?1:0;
  for(var i=1;i<NB;i++)b[i]=rnd()<P.pt?1-b[i-1]:b[i-1];
  for(var i=0;i<NB;i++){jk[i]=gauss()*P.sj;gk[i]=1+P.sv*(2*rnd()-1);}
  for(var i=1;i<NB-1;i++){var a=0;if(b[i]===b[i+1]){a=(b[i-1]!==b[i])?P.D:P.L;if(!b[i])a=-a*P.Dz;}amp[i]=a*(1+P.dj*gauss());}
  amp[0]=0;amp[NB-1]=0;
  var jt=gauss()*P.sj+P.ju*(2*rnd()-1);
  for(var c=0;c<cols;c++){
    var u=uc[c]-jt,s=b[0],dd2=0;
    for(var i=1;i<NB;i++){
      var d=b[i]-b[i-1];
      if(d!==0){var t=(u-(KMIN+i)-jk[i])*gk[i];if(t>=TL)s+=d;else if(t>-TL)s+=d*SL[((t+TL)*R)|0];}
      if(amp[i]!==0){var t2=u-(KMIN+i+1);if(t2>P.s0&&t2<P.s1){var dm=amp[i]*BL[((t2+TL)*R)|0];s+=dm;dd2+=dm>0?dm:-dm;}}
    }
    v[c]=s;vd[c]=dd2;
  }
  for(var c=0;c<cols;c++){
    var dv=(c>0&&c<cols-1)?(v[c+1]-v[c-1])*0.5*P.UI:0;
    var x=v[c]-P.dcd*Math.abs(dv);
    var cl=x<0?0:(x>1?1:x);
    var q2=2*cl-1;var dr=vd[c]/P.D;dr=dr>1?1:dr;var nf=(1+P.na*(1-cl))*(1+P.kap*q2*q2)*(1-(P.dn||0)*dr);
    x+=nf*(GT[gi]*P.sn+P.su*(2*rnd()-1));gi=(gi+1)&(NT-1);
    if(P.ht>0&&rnd()<P.ht){x+=GT[gi]*P.hs;gi=(gi+1)&(NT-1);}
    var iy=Math.round(P.ybot-(P.ybot-P.ytop)*x);
    if(iy>72&&iy<675)hist[iy*W+P.X0+c]+=1;
  }
}
var st=P.st;
var vals=[];for(var i=0;i<hist.length;i+=7)if(hist[i]>0)vals.push(hist[i]);vals.sort(function(a,b){return a-b;});
var mx=vals[Math.floor(vals.length*0.999)];
var LUTc=new Uint8Array(4096*3),LM=Math.log(1+mx/P.k);
for(var h=1;h<4096;h++){var t=Math.log(1+Math.min(h,mx)/P.k)/LM;var j=1;while(j<st.length-1&&t>st[j][0])j++;var A=st[j-1],B=st[j],f=(t-A[0])/(B[0]-A[0]);f=f<0?0:(f>1?1:f);for(var q=0;q<3;q++)LUTc[h*3+q]=Math.round(A[q+1]+(B[q+1]-A[q+1])*f);}
var img=ctx.createImageData(W,H),dd=img.data;
for(var y=73;y<675;y++)for(var x=P.X0;x<P.X1;x++){var h=hist[y*W+x];if(h>0){h=h>4095?4095:h;var o=(y*W+x)*4;dd[o]=LUTc[h*3];dd[o+1]=LUTc[h*3+1];dd[o+2]=LUTc[h*3+2];dd[o+3]=255;}}
ctx.putImageData(img,0,0);
})();
</script><!--/EYE-->
</body></html>
